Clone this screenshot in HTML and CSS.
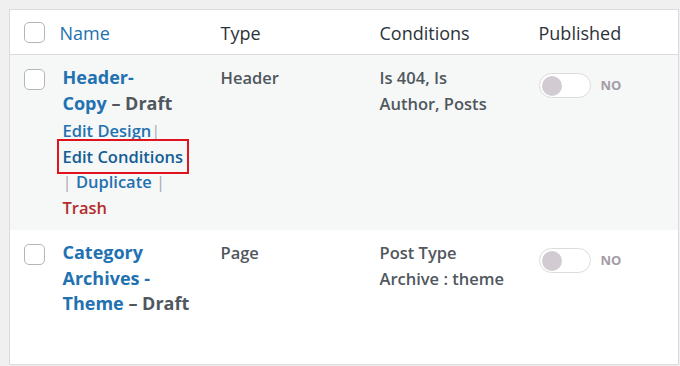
FILE: index.html
```html
<!DOCTYPE html>
<html lang="en">
<head>
    <meta charset="UTF-8">
    <meta name="viewport" content="width=device-width, initial-scale=1.0">
    <title>Templates</title>
    <link rel="stylesheet" href="styles.css">
</head>
<body>
    <table class="list-table">
        <colgroup>
            <col class="col-cb">
            <col class="col-name">
            <col class="col-type">
            <col class="col-cond">
            <col class="col-pub">
        </colgroup>
        <thead>
            <tr>
                <th class="check-column"><span class="checkbox"></span></th>
                <th><a class="sort-link" href="#">Name</a></th>
                <th>Type</th>
                <th>Conditions</th>
                <th>Published</th>
            </tr>
        </thead>
        <tbody>
            <tr class="alternate">
                <td class="check-column"><span class="checkbox"></span></td>
                <td class="title-cell">
                    <div class="row-title"><a href="#">Header-<br>Copy</a> <span class="post-state">&ndash; Draft</span></div>
                    <div class="row-actions">
                        <a href="#">Edit Design</a><span class="sep">|</span><br>
                        <a href="#" class="highlight">Edit Conditions</a><br>
                        <span class="sep lead">|</span> <a href="#">Duplicate</a> <span class="sep">|</span><br>
                        <a href="#" class="trash">Trash</a>
                    </div>
                </td>
                <td class="meta">Header</td>
                <td class="meta">Is 404, Is<br>Author, Posts</td>
                <td>
                    <div class="switch-wrap">
                        <span class="switch"><span class="knob"></span></span>
                        <span class="switch-label">NO</span>
                    </div>
                </td>
            </tr>
            <tr class="last-row">
                <td class="check-column"><span class="checkbox"></span></td>
                <td class="title-cell">
                    <div class="row-title"><a href="#">Category<br>Archives -<br>Theme</a> <span class="post-state">&ndash; Draft</span></div>
                </td>
                <td class="meta">Page</td>
                <td class="meta">Post Type<br>Archive : theme</td>
                <td>
                    <div class="switch-wrap">
                        <span class="switch"><span class="knob"></span></span>
                        <span class="switch-label">NO</span>
                    </div>
                </td>
            </tr>
        </tbody>
    </table>
</body>
</html>
```

FILE: styles.css
```css
* {
    margin: 0;
    padding: 0;
    box-sizing: border-box;
}

body {
    font-family: "Open Sans", "Noto Sans", sans-serif;
    background: #f0f0f1;
    padding: 9px 1px 2px 9px;
    color: #2c3338;
}

a {
    text-decoration: none;
}

.list-table {
    width: 670px;
    border: 1px solid #dcdcde;
    border-collapse: collapse;
    table-layout: fixed;
    background: #fff;
}

.col-cb { width: 50px; }
.col-name { width: 161px; }
.col-type { width: 159px; }
.col-cond { width: 159px; }

th {
    height: 45px;
    text-align: left;
    font-weight: 400;
    font-size: 18px;
    color: #2c3338;
    border-bottom: 1px solid #dcdcde;
    vertical-align: middle;
    padding-top: 1px;
}

.sort-link {
    color: #2271b1;
}

td {
    vertical-align: top;
    padding: 10px 10px 10px 0;
    font-size: 16.5px;
    line-height: 25.5px;
    white-space: nowrap;
}

.check-column {
    padding: 0 0 0 14px;
}

td.check-column {
    padding-top: 14px;
}

th.check-column {
    padding-top: 1px;
}

.checkbox {
    display: block;
    width: 21px;
    height: 21px;
    border: 1px solid #b5b5b8;
    border-radius: 5px;
    background: #fff;
}

.alternate {
    background: #f6f7f7;
}

.last-row td {
    padding-bottom: 47px;
}

.title-cell {
    padding-left: 3px;
}

.row-title {
    font-size: 18px;
    font-weight: 700;
}

.row-title a {
    color: #2271b1;
}

.post-state {
    color: #50575e;
}

.row-actions {
    padding-top: 2px;
    font-weight: 600;
}

.row-actions a {
    color: #2271b1;
}

.row-actions .highlight {
    color: #135e96;
    outline: 2px solid #e0141e;
    outline-offset: 4px;
}

.row-actions .trash {
    color: #b32d2e;
}

.sep {
    color: #a7aaad;
    font-weight: 400;
}

.meta {
    color: #50575e;
    font-weight: 600;
}

.switch-wrap {
    display: flex;
    align-items: center;
    gap: 10px;
    padding-top: 8px;
}

.switch {
    display: flex;
    align-items: center;
    width: 52px;
    height: 25px;
    padding: 0 2px;
    background: #fff;
    border: 1px solid #dcdcde;
    border-radius: 13px;
}

.knob {
    width: 20px;
    height: 20px;
    border-radius: 50%;
    background: #d2ccd2;
}

.switch-label {
    font-size: 13px;
    font-weight: 700;
    color: #a49ca6;
}
```
